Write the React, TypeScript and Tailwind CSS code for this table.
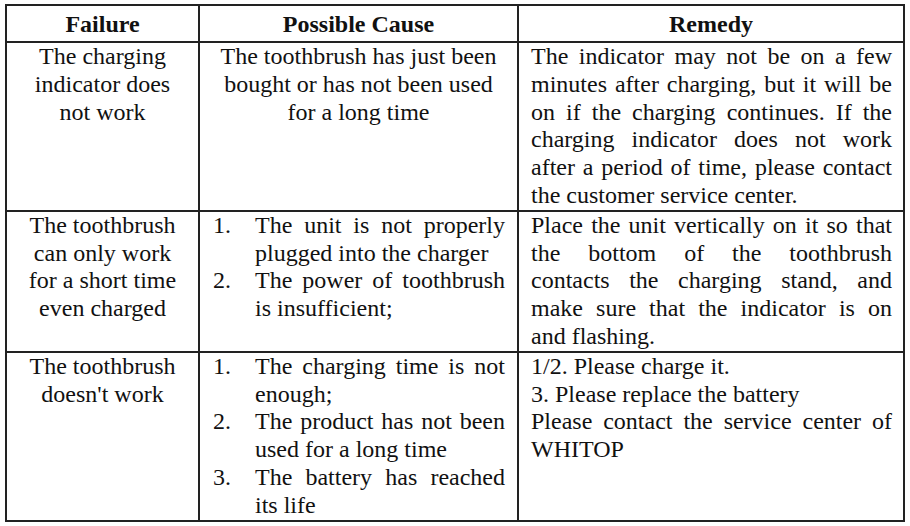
import React from "react";

type Row = {
  failure: string;
  cause: string | string[][];
  remedy: string[][];
};

// lines are kept as in the printed manual so justified text breaks the same way
const rows: Row[] = [
  {
    failure: "The charging indicator does not work",
    cause: "The toothbrush has just been bought or has not been used for a long time",
    remedy: [
      [
        "The indicator may not be on a few",
        "minutes after charging, but it will be",
        "on if the charging continues. If the",
        "charging indicator does not work",
        "after a period of time, please contact",
        "the customer service center.",
      ],
    ],
  },
  {
    failure: "The toothbrush can only work for a short time even charged",
    cause: [
      ["The unit is not properly", "plugged into the charger"],
      ["The power of toothbrush", "is insufficient;"],
    ],
    remedy: [
      [
        "Place the unit vertically on it so that",
        "the bottom of the toothbrush",
        "contacts the charging stand, and",
        "make sure that the indicator is on",
        "and flashing.",
      ],
    ],
  },
  {
    failure: "The toothbrush doesn't work",
    cause: [
      ["The charging time is not", "enough;"],
      ["The product has not been", "used for a long time"],
      ["The battery has reached", "its life"],
    ],
    remedy: [
      ["1/2. Please charge it."],
      ["3. Please replace the battery"],
      ["Please contact the service center of", "WHITOP"],
    ],
  },
];

const cell = "border-r-2 border-b-2 border-[#222]";

const Lines = ({ lines }: { lines: string[] }) => (
  <p>
    {lines.map((l, k) => (
      <span
        key={k}
        className={k < lines.length - 1 ? "block text-justify [text-align-last:justify]" : "block"}
      >
        {l}
      </span>
    ))}
  </p>
);

export default function App() {
  return (
    <div className="min-h-screen bg-white pt-[4px] pl-[5px] font-[family-name:'Liberation_Serif','Times_New_Roman',serif] text-[24px] leading-[27.8px] text-[#111]">
      <div className="grid w-[900px] grid-cols-[193px_319px_386px] border-l-2 border-t-2 border-[#222]">
        {["Failure", "Possible Cause", "Remedy"].map((h) => (
          <div key={h} className={`${cell} pt-[2px] text-center font-bold leading-[33px]`}>
            {h}
          </div>
        ))}

        {rows.map((row, i) => (
          <React.Fragment key={i}>
            <div className={`${cell} px-[20px] text-center`}>{row.failure}</div>

            {typeof row.cause === "string" ? (
              <div className={`${cell} px-[14px] text-center`}>{row.cause}</div>
            ) : (
              <div className={`${cell} pl-[13px] pr-[12px]`}>
                {row.cause.map((c, j) => (
                  <div key={j} className="flex">
                    <span className="w-[42px] shrink-0">{j + 1}.</span>
                    <div className="flex-1">
                      <Lines lines={c} />
                    </div>
                  </div>
                ))}
              </div>
            )}

            <div className={`${cell} pl-[12px] pr-[11px]`}>
              {row.remedy.map((r, j) => (
                <Lines key={j} lines={r} />
              ))}
            </div>
          </React.Fragment>
        ))}
      </div>
    </div>
  );
}
